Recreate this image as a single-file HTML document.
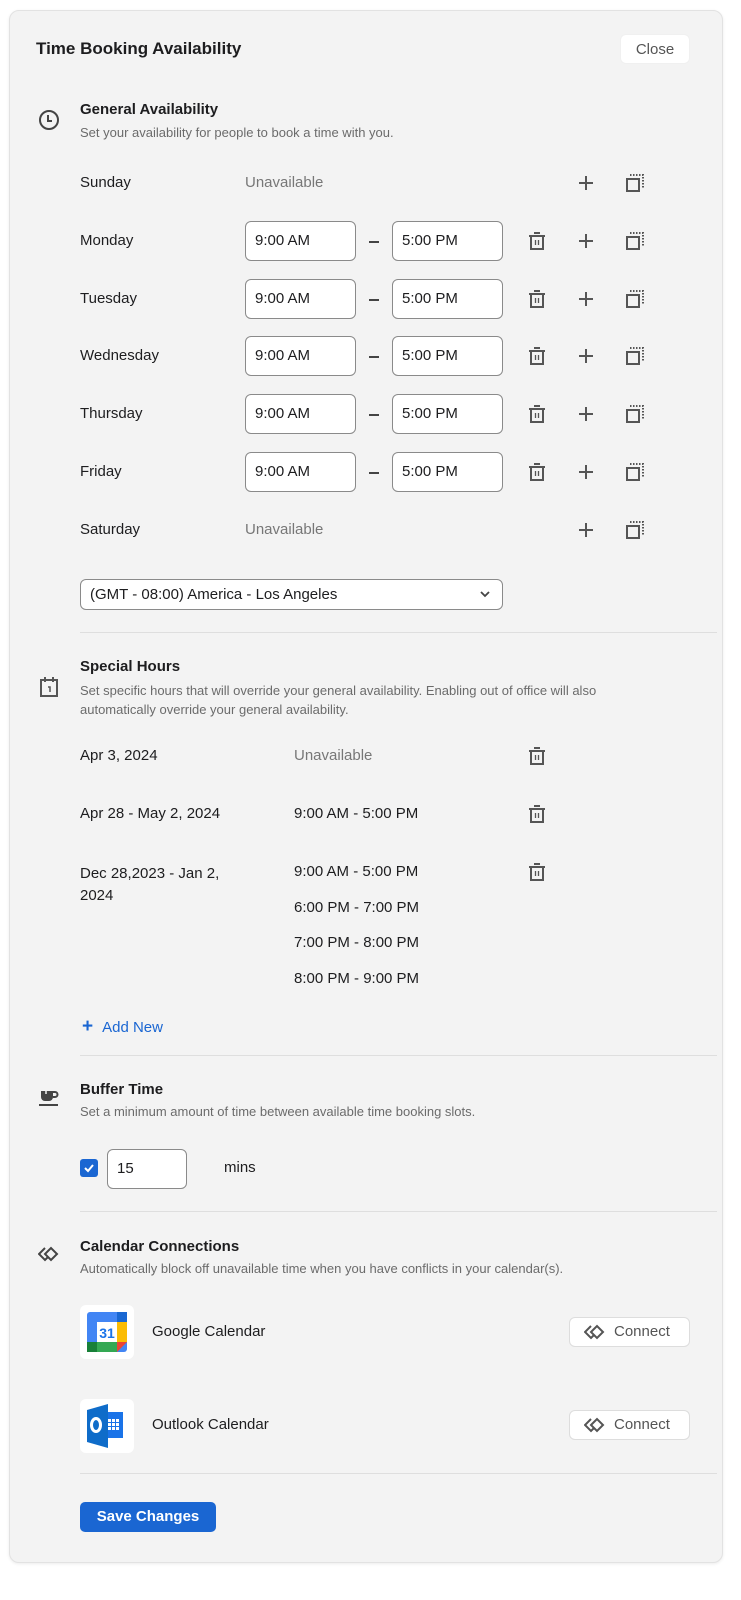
<!DOCTYPE html>
<html><head><meta charset="utf-8"><style>
*{box-sizing:border-box;margin:0;padding:0}
body{width:741px;height:1600px;background:#fff;font-family:"Liberation Sans",sans-serif;color:#1d1d1f;position:relative;overflow:hidden}
.card{position:absolute;left:9px;top:10px;width:714px;height:1553px;background:#f3f3f3;border:1px solid #e2e2e2;border-radius:10px;box-shadow:0 1px 3px rgba(0,0,0,.08)}
.a{position:absolute;white-space:nowrap}
.t{font-size:15px;font-weight:bold;color:#1d1d1f}
.s{font-size:13px;color:#6b6b6b}
.d{font-size:15px;color:#1d1d1f}
.u{font-size:15px;color:#777}
.inp{position:absolute;width:111px;height:40px;background:#fff;border:1px solid #8a8a8a;border-radius:6px;font-size:15px;padding:10px 9px;color:#1d1d1f}
.hr{position:absolute;left:80px;width:637px;height:1px;background:#dedede}
.btn{position:absolute;background:#fff;border:1px solid #ddd;border-radius:6px;font-size:15px;color:#555}
svg{position:absolute}
</style></head><body>
<div class="card"></div>
<div class="a" style="left:36px;top:39px;font-size:17px;font-weight:bold">Time Booking Availability</div>
<div class="btn" style="left:620px;top:34px;width:70px;height:30px;border-color:#f0f0f0;text-align:center;line-height:29px">Close</div>

<svg style="left:38px;top:109px" width="22" height="22" viewBox="0 0 22 22"><circle cx="11" cy="11" r="9" fill="none" stroke="#444" stroke-width="2"/><path d="M10 6v6h4" fill="none" stroke="#444" stroke-width="2"/></svg>
<div class="a t" style="left:80px;top:101px">General Availability</div>
<div class="a s" style="left:80px;top:125px">Set your availability for people to book a time with you.</div>

<div id="rows"></div>

<div style="position:absolute;left:80px;top:579px;width:423px;height:31px;background:#fff;border:1px solid #8a8a8a;border-radius:6px;font-size:15px;padding:6px 9px">(GMT - 08:00) America - Los Angeles</div>
<svg style="left:479px;top:589px" width="12" height="10" viewBox="0 0 12 10"><path d="M2 3l4 4 4-4" fill="none" stroke="#444" stroke-width="1.8"/></svg>
<div class="hr" style="top:632px"></div>

<svg style="left:38px;top:676px" width="22" height="22" viewBox="0 0 22 22"><path d="M3 4h16v16H3z" fill="none" stroke="#555" stroke-width="2"/><path d="M7 1v5M15 1v5" stroke="#555" stroke-width="2"/><path d="M10 11h2v5" fill="none" stroke="#555" stroke-width="1.5"/></svg>
<div class="a t" style="left:80px;top:658px">Special Hours</div>
<div class="a s" style="left:80px;top:681px;line-height:19px">Set specific hours that will override your general availability. Enabling out of office will also<br>automatically override your general availability.</div>

<div class="a d" style="left:80px;top:747px">Apr 3, 2024</div>
<div class="a u" style="left:294px;top:747px">Unavailable</div>
<div class="a d" style="left:80px;top:805px">Apr 28 - May 2, 2024</div>
<div class="a d" style="left:294px;top:805px">9:00 AM - 5:00 PM</div>
<div class="a d" style="left:80px;top:863px;line-height:22px">Dec 28,2023 - Jan 2,<br>2024</div>
<div class="a d" style="left:294px;top:863px">9:00 AM - 5:00 PM</div>
<div class="a d" style="left:294px;top:899px">6:00 PM - 7:00 PM</div>
<div class="a d" style="left:294px;top:934px">7:00 PM - 8:00 PM</div>
<div class="a d" style="left:294px;top:970px">8:00 PM - 9:00 PM</div>
<div id="sh"></div>

<div class="a" style="left:82px;top:1016px;font-size:15px;color:#1a66d2"><span style="font-size:19px;font-weight:bold;margin-right:9px">+</span>Add New</div>
<div class="hr" style="top:1055px"></div>

<svg style="left:38px;top:1088px" width="22" height="22" viewBox="0 0 22 22"><path d="M3 3h12v6a4 4 0 0 1-4 4H7a4 4 0 0 1-4-4z" fill="#444"/><path d="M15 4h2a2 2 0 0 1 0 5h-2" fill="none" stroke="#444" stroke-width="2"/><rect x="1" y="16" width="19" height="2" fill="#444"/><path d="M8 2v4" stroke="#f3f3f3" stroke-width="1.5"/></svg>
<div class="a t" style="left:80px;top:1081px">Buffer Time</div>
<div class="a s" style="left:80px;top:1104px">Set a minimum amount of time between available time booking slots.</div>
<div style="position:absolute;left:80px;top:1159px;width:18px;height:18px;background:#1a66d2;border-radius:3px"></div>
<svg style="left:80px;top:1159px" width="18" height="18" viewBox="0 0 18 18"><path d="M5 9l3 3 5-6" fill="none" stroke="#fff" stroke-width="2"/></svg>
<div class="inp" style="left:107px;top:1149px;width:80px;height:40px">15</div>
<div class="a d" style="left:224px;top:1159px">mins</div>
<div class="hr" style="top:1211px"></div>

<svg style="left:38px;top:1246px" width="24" height="16" viewBox="0 0 24 16"><path d="M7 2L1 8l6 6 3-3M10 5L7 8l6 6 6-6-6-6-3 3" fill="none" stroke="#444" stroke-width="2"/></svg>
<div class="a t" style="left:80px;top:1238px">Calendar Connections</div>
<div class="a s" style="left:80px;top:1261px">Automatically block off unavailable time when you have conflicts in your calendar(s).</div>

<div style="position:absolute;left:80px;top:1305px;width:54px;height:54px;background:#fff;border-radius:6px"></div>
<svg style="left:87px;top:1312px" width="40" height="40" viewBox="0 0 40 40"><rect x="0" y="0" width="40" height="40" rx="3" fill="#4285f4"/><rect x="30" y="0" width="10" height="30" fill="#fbbc04"/><rect x="30" y="0" width="10" height="10" fill="#1967d2"/><rect x="0" y="30" width="30" height="10" fill="#34a853"/><rect x="0" y="30" width="10" height="10" fill="#188038"/><path d="M30 30h10L30 40z" fill="#ea4335"/><path d="M30 40v-10h10z" fill="#fff" opacity="0"/><rect x="10" y="10" width="20" height="20" fill="#fff"/><text x="20" y="26" text-anchor="middle" font-family="Liberation Sans" font-weight="bold" font-size="14" fill="#1a73e8">31</text></svg>
<div class="a d" style="left:152px;top:1323px">Google Calendar</div>
<div class="btn" style="left:569px;top:1317px;width:121px;height:30px;line-height:28px;padding-left:44px">Connect</div>
<svg style="left:584px;top:1324px" width="24" height="16" viewBox="0 0 24 16"><path d="M7 2L1 8l6 6 3-3M10 5L7 8l6 6 6-6-6-6-3 3" fill="none" stroke="#555" stroke-width="2"/></svg>

<div style="position:absolute;left:80px;top:1399px;width:54px;height:54px;background:#fff;border-radius:6px"></div>
<svg style="left:87px;top:1404px" width="40" height="44" viewBox="0 0 40 44"><rect x="18" y="8" width="18" height="26" fill="#1a73e8"/><g fill="#fff"><rect x="21" y="15" width="3" height="3"/><rect x="25" y="15" width="3" height="3"/><rect x="29" y="15" width="3" height="3"/><rect x="21" y="19" width="3" height="3"/><rect x="25" y="19" width="3" height="3"/><rect x="29" y="19" width="3" height="3"/><rect x="21" y="23" width="3" height="3"/><rect x="25" y="23" width="3" height="3"/><rect x="29" y="23" width="3" height="3"/></g><path d="M0 6L21 0v44L0 38z" fill="#0f6cc9"/><ellipse cx="9" cy="21" rx="4.5" ry="6.5" fill="none" stroke="#fff" stroke-width="3"/></svg>
<div class="a d" style="left:152px;top:1416px">Outlook Calendar</div>
<div class="btn" style="left:569px;top:1410px;width:121px;height:30px;line-height:28px;padding-left:44px">Connect</div>
<svg style="left:584px;top:1417px" width="24" height="16" viewBox="0 0 24 16"><path d="M7 2L1 8l6 6 3-3M10 5L7 8l6 6 6-6-6-6-3 3" fill="none" stroke="#555" stroke-width="2"/></svg>

<div class="hr" style="top:1473px"></div>
<div style="position:absolute;left:80px;top:1502px;width:136px;height:30px;background:#1a66d2;border-radius:5px;color:#fff;font-size:15px;font-weight:bold;text-align:center;line-height:30px">Save Changes</div>

<script>
var days=["Sunday","Monday","Tuesday","Wednesday","Thursday","Friday","Saturday"];
var ys=[183,241,299,356,414,472,530];
var trash='<svg width="18" height="20" viewBox="0 0 18 20"><path d="M6 2h6" stroke="#555" stroke-width="2"/><path d="M1 5h16" stroke="#555" stroke-width="2"/><path d="M3 5v13h12V5" fill="none" stroke="#555" stroke-width="2"/><path d="M7.5 9v5M10.5 9v5" stroke="#555" stroke-width="1.3"/></svg>';
var plus='<svg width="16" height="16" viewBox="0 0 16 16"><path d="M8 1v14M1 8h14" stroke="#555" stroke-width="2"/></svg>';
var copy='<svg width="20" height="20" viewBox="0 0 20 20"><rect x="2" y="6" width="12" height="12" fill="none" stroke="#555" stroke-width="2"/><path d="M5 2h13v13" fill="none" stroke="#555" stroke-width="2" stroke-dasharray="1.5 1.5"/></svg>';
var h="";
for(var i=0;i<7;i++){var y=ys[i];
h+='<div class="a d" style="left:80px;top:'+(y-9)+'px">'+days[i]+'</div>';
if(i==0||i==6){h+='<div class="a u" style="left:245px;top:'+(y-9)+'px">Unavailable</div>';}
else{h+='<div class="inp" style="left:245px;top:'+(y-20)+'px">9:00 AM</div><div class="inp" style="left:392px;top:'+(y-20)+'px">5:00 PM</div><div style="position:absolute;left:369px;top:'+y+'px;width:10px;height:2px;background:#444"></div>';
h+='<div style="position:absolute;left:528px;top:'+(y-10)+'px;width:18px;height:20px">'+trash+'</div>';}
h+='<div style="position:absolute;left:578px;top:'+(y-8)+'px;width:16px;height:16px">'+plus+'</div>';
h+='<div style="position:absolute;left:625px;top:'+(y-10)+'px;width:20px;height:20px">'+copy+'</div>';}
document.getElementById("rows").innerHTML=h;
var s="";[756,814,872].forEach(function(y){s+='<div style="position:absolute;left:528px;top:'+(y-10)+'px;width:18px;height:20px">'+trash+'</div>';});
document.getElementById("sh").innerHTML=s;
</script>
</body></html>
